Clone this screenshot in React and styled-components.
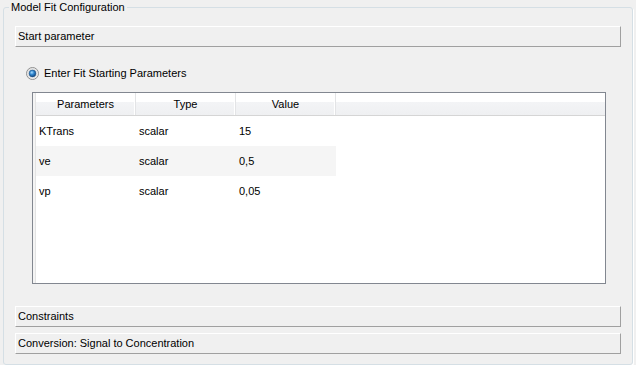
import React from 'react';
import styled, { createGlobalStyle } from 'styled-components';

const GlobalStyle = createGlobalStyle`
  html, body {
    margin: 0;
    padding: 0;
    background: #f0f0f0;
  }
  body {
    width: 636px;
    height: 365px;
    overflow: hidden;
    font-family: "Liberation Sans", Arial, sans-serif;
    font-size: 11px;
    color: #000;
  }
`;

const GroupBox = styled.fieldset`
  box-sizing: border-box;
  margin: 0 3px;
  padding: 12px 11px 10px 11px;
  border: 1px solid #d5dfe5;
  border-radius: 3px;
  box-shadow: 1px 1px 0 #ffffff;
  min-inline-size: 0;
  display: flex;
  flex-direction: column;
`;

const Legend = styled.legend`
  margin-left: -6px;
  padding: 0 2px;
  line-height: 14px;
  height: 14px;
`;

const SectionBar = styled.div`
  box-sizing: border-box;
  height: 21px;
  line-height: 19px;
  padding-left: 2px;
  border-top: 1px solid #ffffff;
  border-left: 1px solid #ffffff;
  border-right: 1px solid #a0a0a0;
  border-bottom: 1px solid #a0a0a0;
  background: #f0f0f0;
  margin-top: ${p => p.$gap || 0}px;
`;

const SectionBody = styled.div`
  display: flex;
  flex-direction: column;
  padding: 20px 15px 0 11px;
`;

const RadioRow = styled.label`
  display: flex;
  align-items: center;
  gap: 5px;
  height: 13px;
  line-height: 13px;
`;

const TableFrame = styled.div`
  box-sizing: border-box;
  margin: 12px 0 0 6px;
  height: 192px;
  border: 1px solid #828790;
  background: #ffffff;
  display: flex;
`;

const SideStrip = styled.div`
  width: 2px;
  border-right: 1px solid #e3e3e3;
  background: #f4f4f4;
`;

const Grid = styled.div`
  flex: 1;
  display: flex;
  flex-direction: column;
`;

const HeaderRow = styled.div`
  display: flex;
  height: 22px;
  border-bottom: 1px solid #d5d5d5;
  background: linear-gradient(#ffffff 0, #ffffff 9px, #f3f4f6 9px, #eff0f2 100%);
`;

const HeaderCell = styled.div`
  box-sizing: border-box;
  width: ${p => (p.$fill ? 'auto' : '100px')};
  flex: ${p => (p.$fill ? 1 : 'none')};
  text-align: center;
  line-height: 22px;
  border-right: ${p => (p.$fill ? 'none' : '1px solid #e3e4e6')};
  box-shadow: ${p => (p.$fill ? 'none' : 'inset -1px 0 0 #ffffff')};
`;

const Row = styled.div`
  display: flex;
  width: 300px;
  height: 30px;
  background: ${p => (p.$alt ? '#f5f5f5' : '#ffffff')};
`;

const Cell = styled.div`
  box-sizing: border-box;
  width: 100px;
  padding-left: 3px;
  line-height: 30px;
  white-space: nowrap;
`;

const RadioIcon = () => (
  <svg width="13" height="13" viewBox="0 0 13 13">
    <defs>
      <linearGradient id="rbg" x1="0" y1="0" x2="1" y2="1">
        <stop offset="0" stopColor="#e6e6e6" />
        <stop offset="1" stopColor="#ffffff" />
      </linearGradient>
      <radialGradient id="rdot" cx="0.4" cy="0.35" r="0.7">
        <stop offset="0" stopColor="#a8dcff" />
        <stop offset="0.45" stopColor="#2f86cf" />
        <stop offset="1" stopColor="#123f73" />
      </radialGradient>
    </defs>
    <circle cx="6.5" cy="6.5" r="6" fill="url(#rbg)" stroke="#8f8f8f" strokeWidth="1" />
    <circle cx="6.5" cy="6.5" r="4.6" fill="none" stroke="#d4d4d4" strokeWidth="0.8" />
    <circle cx="6.5" cy="6.5" r="3.4" fill="url(#rdot)" stroke="#1a4f84" strokeWidth="0.6" />
  </svg>
);

const params = [
  { name: 'KTrans', type: 'scalar', value: '15' },
  { name: 've', type: 'scalar', value: '0,5' },
  { name: 'vp', type: 'scalar', value: '0,05' },
];

function App() {
  return (
    <>
      <GlobalStyle />
      <GroupBox>
        <Legend>Model Fit Configuration</Legend>
        <SectionBar>Start parameter</SectionBar>
        <SectionBody>
          <RadioRow>
            <RadioIcon />
            Enter Fit Starting Parameters
          </RadioRow>
          <TableFrame>
            <SideStrip />
            <Grid>
              <HeaderRow>
                <HeaderCell>Parameters</HeaderCell>
                <HeaderCell>Type</HeaderCell>
                <HeaderCell>Value</HeaderCell>
                <HeaderCell $fill />
              </HeaderRow>
              {params.map((p, i) => (
                <Row key={p.name} $alt={i % 2 === 1}>
                  <Cell>{p.name}</Cell>
                  <Cell>{p.type}</Cell>
                  <Cell>{p.value}</Cell>
                </Row>
              ))}
            </Grid>
          </TableFrame>
        </SectionBody>
        <SectionBar $gap={22}>Constraints</SectionBar>
        <SectionBar $gap={6}>Conversion: Signal to Concentration</SectionBar>
      </GroupBox>
    </>
  );
}

export default App;
